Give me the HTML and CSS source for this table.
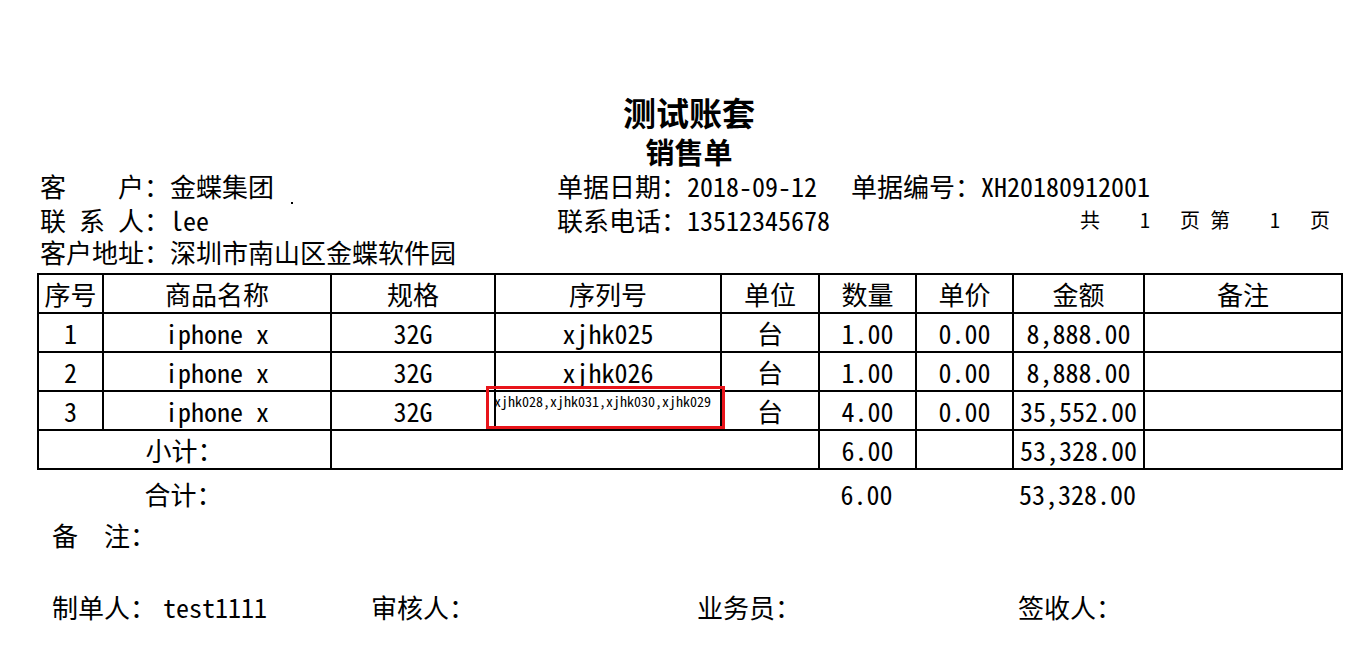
FILE: index.html
```html
<!DOCTYPE html>
<html lang="zh-CN">
<head>
<meta charset="utf-8">
<title>销售单</title>
<link rel="stylesheet" href="styles.css">
</head>
<body>
<div class="page">
  <h1 class="title">测试账套</h1>
  <h2 class="subtitle">销售单</h2>
  <div class="info">
    <div class="c1">客　　户：金蝶集团<span class="dot"></span></div>
    <div class="c2">单据日期：2018-09-12</div>
    <div class="c3">单据编号：XH20180912001</div>
    <div class="c1">联 系 人：lee</div>
    <div class="c2">联系电话：13512345678</div>
    <div class="pager">共    1   页 第    1   页</div>
    <div class="full">客户地址：深圳市南山区金蝶软件园</div>
  </div>
  <table class="grid">
    <colgroup>
      <col class="w1"><col class="w2"><col class="w3"><col class="w4"><col class="w5"><col class="w6"><col class="w7"><col class="w8"><col class="w9">
    </colgroup>
    <tr><td>序号</td><td>商品名称</td><td>规格</td><td>序列号</td><td>单位</td><td>数量</td><td>单价</td><td>金额</td><td>备注</td></tr>
    <tr><td>1</td><td>iphone x</td><td>32G</td><td>xjhk025</td><td>台</td><td>1.00</td><td>0.00</td><td>8,888.00</td><td></td></tr>
    <tr><td>2</td><td>iphone x</td><td>32G</td><td>xjhk026</td><td>台</td><td>1.00</td><td>0.00</td><td>8,888.00</td><td></td></tr>
    <tr><td>3</td><td>iphone x</td><td>32G</td><td class="serials"><span class="small">xjhk028,xjhk031,xjhk030,xjhk029</span><span class="mark"></span></td><td>台</td><td>4.00</td><td>0.00</td><td>35,552.00</td><td></td></tr>
    <tr><td colspan="2">小计：</td><td colspan="3"></td><td>6.00</td><td></td><td>53,328.00</td><td></td></tr>
  </table>
  <table class="totals">
    <colgroup>
      <col class="w1"><col class="w2"><col class="w3"><col class="w4"><col class="w5"><col class="w6"><col class="w7"><col class="w8"><col class="w9">
    </colgroup>
    <tr><td colspan="2">合计：</td><td colspan="3"></td><td>6.00</td><td></td><td>53,328.00</td><td></td></tr>
  </table>
  <div class="remark">备　注：</div>
  <div class="sign">
    <div>制单人：<span class="maker">test1111</span></div>
    <div>审核人：</div>
    <div>业务员：</div>
    <div>签收人：</div>
  </div>
</div>
</body>
</html>
```

FILE: styles.css
```css
html, body {
  margin: 0;
  padding: 0;
  background: #fff;
}
body {
  font-family: "Noto Sans Mono CJK SC", "Noto Sans CJK SC", "Liberation Mono", monospace;
  font-size: 26px;
  color: #000;
}
.page {
  width: 1304px;
  padding: 92px 0 0 37px;
}
.title {
  margin: 0;
  font-size: 33px;
  font-weight: 700;
  line-height: 40px;
  text-align: center;
}
.subtitle {
  margin: 0;
  font-size: 29px;
  font-weight: 700;
  line-height: 38px;
  text-align: center;
}
.info {
  display: grid;
  grid-template-columns: 517px 294px 1fr;
  padding-left: 3px;
  line-height: 32px;
  white-space: pre;
}
.info .full {
  grid-column: 1 / -1;
}
.pager {
  font-size: 20px;
  margin-left: 229px;
}
.dot {
  display: inline-block;
  width: 2px;
  height: 2px;
  background: #000;
  margin-left: 17px;
  vertical-align: -7px;
}
table {
  border-collapse: collapse;
  table-layout: fixed;
  width: 1304px;
}
.grid {
  margin-top: 5px;
  border: 2px solid #000;
}
.w1 { width: 65px; }
.w2 { width: 228px; }
.w3 { width: 164px; }
.w4 { width: 226px; }
.w5 { width: 98px; }
.w6 { width: 97px; }
.w7 { width: 97px; }
.w8 { width: 131px; }
.w9 { width: 198px; }
td {
  padding: 0;
  text-align: center;
  vertical-align: middle;
  white-space: pre;
  line-height: 30px;
}
.grid td {
  border: 2px solid #000;
  height: 37px;
}
.grid td.serials {
  position: relative;
  vertical-align: top;
  text-align: left;
}
.small {
  display: block;
  font-size: 14px;
  line-height: 16px;
  padding-top: 1px;
  margin-left: -2px;
}
.mark {
  position: absolute;
  left: -10px;
  top: -6px;
  right: -5px;
  bottom: 0;
  border: 3px solid #e8141a;
}
.totals td {
  height: 47px;
}
.remark {
  padding-left: 15px;
  line-height: 36px;
}
.sign {
  display: grid;
  grid-template-columns: 319px 326px 321px 1fr;
  padding-left: 15px;
  margin-top: 36px;
  line-height: 36px;
}
.maker {
  margin-left: 7px;
}
```
